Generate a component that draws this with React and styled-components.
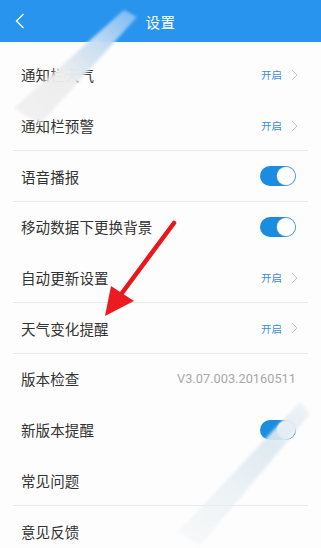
import React from "react";
import styled, { createGlobalStyle } from "styled-components";

const Global = createGlobalStyle`
  html, body { margin: 0; padding: 0; background: #fdfdfd; }
  body { font-family: "Noto Sans CJK SC", "Noto Sans", sans-serif; }
  * { box-sizing: border-box; }
`;

const Page = styled.div`
  position: relative;
  width: 321px;
  height: 548px;
  overflow: hidden;
  background: #fdfdfd;
`;

const Header = styled.header`
  height: 42px;
  background: #2894ee;
  display: grid;
  grid-template-columns: 42px 1fr 42px;
  align-items: center;
`;

const Back = styled.div`
  display: flex;
  align-items: center;
  justify-content: center;
  padding-right: 2px;
`;

const Title = styled.h1`
  margin: 0;
  text-align: center;
  color: #fff;
  font-size: 14.5px;
  font-weight: 400;
  letter-spacing: 0.5px;
`;

const List = styled.div`
  padding-top: 8px;
  display: flex;
  flex-direction: column;
`;

const Row = styled.div`
  height: 50.7px;
  margin: 0 13px;
  padding: 0 10px 0 8px;
  display: flex;
  align-items: center;
  justify-content: space-between;
  border-bottom: 1px solid ${(p) => (p.$divider ? "#e9e9e9" : "transparent")};
`;

const Label = styled.span`
  font-size: 14.5px;
  color: #333;
  letter-spacing: 0.1px;
`;

const Trail = styled.div`
  display: flex;
  align-items: center;
  gap: 9px;
`;

const OnText = styled.span`
  font-size: 10.5px;
  color: #3a8fd9;
`;

const Version = styled.span`
  font-family: Roboto, "Noto Sans", sans-serif;
  font-size: 12.8px;
  color: #a8a8a8;
  margin-right: 2px;
`;

const Toggle = styled.div`
  width: 36px;
  height: 20px;
  border-radius: 10px;
  background: #1a8de0;
  position: relative;
  margin-right: 2px;
  &::after {
    content: "";
    position: absolute;
    right: 1px;
    top: 1px;
    width: 18px;
    height: 18px;
    border-radius: 50%;
    background: #fff;
    box-shadow: 0 0 0 0.5px #9bb;
  }
`;

const Overlay = styled.svg`
  position: absolute;
  left: 0;
  top: 0;
  pointer-events: none;
`;

const Chevron = () => (
  <svg width="7" height="12" viewBox="0 0 7 12">
    <path d="M1 1 L6 6 L1 11" fill="none" stroke="#c4c4c4" strokeWidth="1" />
  </svg>
);

const rows = [
  { label: "通知栏天气", kind: "on" },
  { label: "通知栏预警", kind: "on", divider: true },
  { label: "语音播报", kind: "toggle", divider: true },
  { label: "移动数据下更换背景", kind: "toggle" },
  { label: "自动更新设置", kind: "on", divider: true },
  { label: "天气变化提醒", kind: "on", divider: true },
  { label: "版本检查", kind: "version" },
  { label: "新版本提醒", kind: "toggle" },
  { label: "常见问题", divider: true },
  { label: "意见反馈" },
];

export default function App() {
  return (
    <Page>
      <Global />
      <Header>
        <Back>
          <svg width="10" height="16" viewBox="0 0 10 16">
            <path d="M8.5 1 L1.5 8 L8.5 15" fill="none" stroke="#fff" strokeWidth="1.3" />
          </svg>
        </Back>
        <Title>设置</Title>
        <span />
      </Header>
      <List>
        {rows.map((r) => (
          <Row key={r.label} $divider={r.divider}>
            <Label>{r.label}</Label>
            {r.kind === "on" && (
              <Trail>
                <OnText>开启</OnText>
                <Chevron />
              </Trail>
            )}
            {r.kind === "toggle" && <Toggle />}
            {r.kind === "version" && <Version>V3.07.003.20160511</Version>}
          </Row>
        ))}
      </List>
      <Overlay width="321" height="548" viewBox="0 0 321 548">
        <defs>
          <linearGradient id="b1" x1="130" y1="10" x2="22" y2="122" gradientUnits="userSpaceOnUse">
            <stop offset="0" stopColor="#8fc3f4" stopOpacity="0.85" />
            <stop offset="0.3" stopColor="#c6ddf2" stopOpacity="0.97" />
            <stop offset="0.6" stopColor="#ededed" stopOpacity="0.97" />
            <stop offset="1" stopColor="#eeeeee" stopOpacity="0.8" />
          </linearGradient>
          <linearGradient id="b2" x1="305" y1="400" x2="185" y2="548" gradientUnits="userSpaceOnUse">
            <stop offset="0" stopColor="#eef3f6" stopOpacity="0.95" />
            <stop offset="0.3" stopColor="#dbe8f0" stopOpacity="0.9" />
            <stop offset="1" stopColor="#f2f4f5" stopOpacity="0.5" />
          </linearGradient>
          <filter id="soft" x="-20%" y="-20%" width="140%" height="140%">
            <feGaussianBlur stdDeviation="1.4" />
          </filter>
        </defs>
        <polygon points="124,10 137,17 40,124 14,108" fill="url(#b1)" filter="url(#soft)" />
        <polygon points="300,402 310,414 200,546 178,532" fill="url(#b2)" filter="url(#soft)" />
        <path d="M174 223 L122 293" stroke="#e8161d" strokeWidth="4.5" strokeLinecap="round" />
        <polygon points="105,316 111,286 134,301" fill="#ec1b22" />
      </Overlay>
    </Page>
  );
}
